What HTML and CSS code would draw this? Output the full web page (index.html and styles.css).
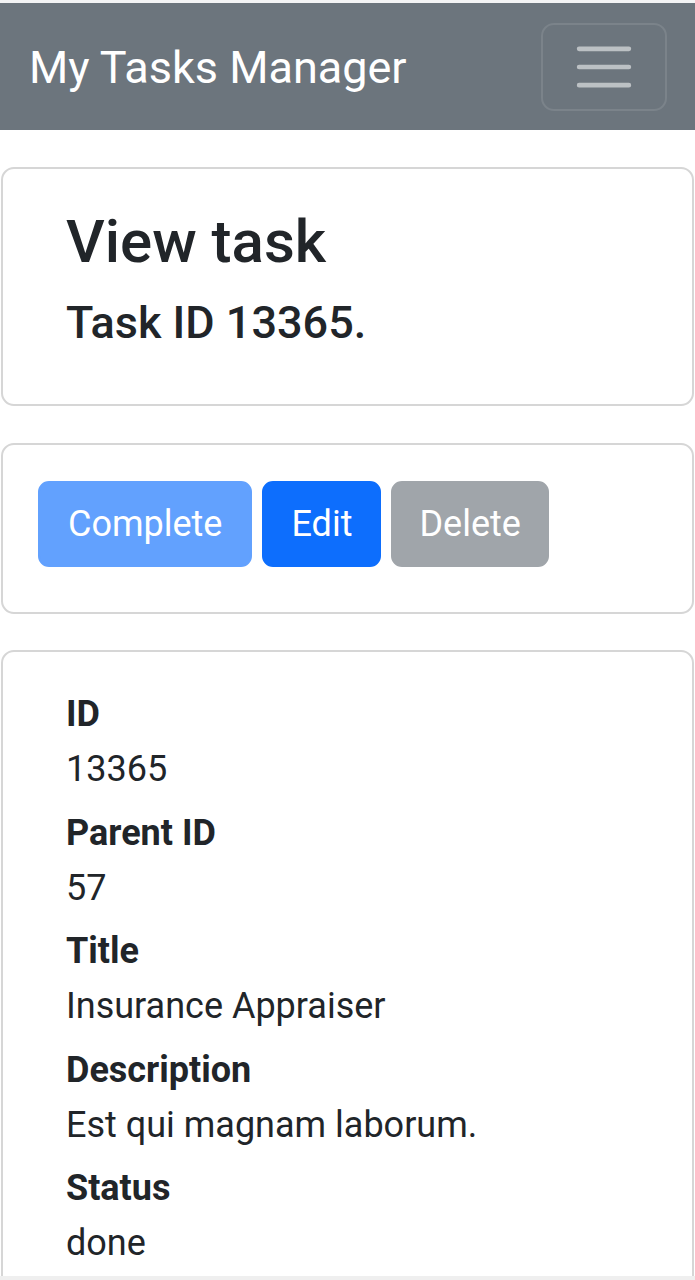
FILE: index.html
```html
<!DOCTYPE html>
<html lang="en">
<head>
<meta charset="utf-8">
<title>My Tasks Manager</title>
<link rel="stylesheet" href="styles.css">
</head>
<body>
<div class="top-strip"></div>
<nav class="navbar">
  <span class="brand">My Tasks Manager</span>
  <button class="toggler" type="button" aria-label="Toggle navigation">
    <svg class="toggler-icon" viewBox="0 0 30 30" width="68" height="68">
      <path d="M4 7h22M4 15h22M4 23h22" stroke="rgba(255,255,255,0.55)" stroke-width="2" stroke-linecap="round" fill="none"/>
    </svg>
  </button>
</nav>
<main class="content">
  <section class="card card-head">
    <h1 class="title">View task</h1>
    <h5 class="subtitle">Task ID 13365.</h5>
  </section>
  <section class="card card-actions">
    <div class="actions">
      <button class="btn btn-complete" type="button">Complete</button>
      <button class="btn btn-edit" type="button">Edit</button>
      <button class="btn btn-delete" type="button">Delete</button>
    </div>
  </section>
  <section class="card card-details">
    <dl class="details">
      <dt>ID</dt>
      <dd>13365</dd>
      <dt>Parent ID</dt>
      <dd>57</dd>
      <dt>Title</dt>
      <dd>Insurance Appraiser</dd>
      <dt>Description</dt>
      <dd>Est qui magnam laborum.</dd>
      <dt>Status</dt>
      <dd>done</dd>
    </dl>
  </section>
</main>
<div class="bottom-strip"></div>
</body>
</html>
```
FILE: styles.css
```css
* { box-sizing: border-box; }
html, body { margin: 0; padding: 0; }
body {
  font-family: Roboto, "Liberation Sans", sans-serif;
  color: #212529;
  background: #fff;
  font-size: 36px;
  line-height: 1.5;
}
.top-strip { height: 3px; background: #f3f4f5; }
.navbar {
  background: #6c757d;
  height: 127px;
  display: flex;
  align-items: center;
  justify-content: space-between;
  padding: 0 28px 0 29px;
}
.brand {
  color: #fff;
  font-size: 45px;
  line-height: 66px;
  padding-top: 3px;
}
.toggler {
  width: 126px;
  height: 88px;
  background: transparent;
  border: 2px solid rgba(255,255,255,0.1);
  border-radius: 13px;
  padding: 0;
  display: flex;
  align-items: center;
  justify-content: center;
}
.toggler-icon { display: block; }
.content {
  padding: 37px 1px 0 1px;
  display: flex;
  flex-direction: column;
}
.card {
  border: 2px solid #d6d6d6;
  border-radius: 13px;
  background: #fff;
}
.card-head { padding: 37px 63px 36px; margin-bottom: 37px; }
.title {
  margin: 0 0 18px;
  font-size: 60px;
  font-weight: 500;
  line-height: 1.2;
}
.subtitle {
  margin: 0 0 18px;
  font-size: 45px;
  font-weight: 500;
  line-height: 1.2;
}
.card-actions { padding: 36px 35px; margin-bottom: 36px; }
.actions {
  display: flex;
  gap: 10px;
  margin-bottom: 9px;
}
.btn {
  font-family: Roboto, "Liberation Sans", sans-serif;
  font-size: 36px;
  line-height: 54px;
  padding: 14px 27px;
  border: 2px solid transparent;
  border-radius: 11px;
  color: #fff;
}
.btn-complete { background: #62a1fe; border-color: #62a1fe; padding: 14px 28px; }
.btn-edit { background: #0d6efd; border-color: #0d6efd; }
.btn-delete { background: #a0a5aa; border-color: #a0a5aa; padding: 14px 26px; }
.card-details { padding: 35px 63px 60px; }
.details { margin: 0; }
.details dt {
  font-weight: 700;
  line-height: 55px;
}
.details dd {
  margin: 0 0 8.5px;
  line-height: 55px;
}
.bottom-strip {
  position: fixed;
  left: 0;
  right: 0;
  bottom: 0;
  height: 4px;
  background: #efefef;
}
```
